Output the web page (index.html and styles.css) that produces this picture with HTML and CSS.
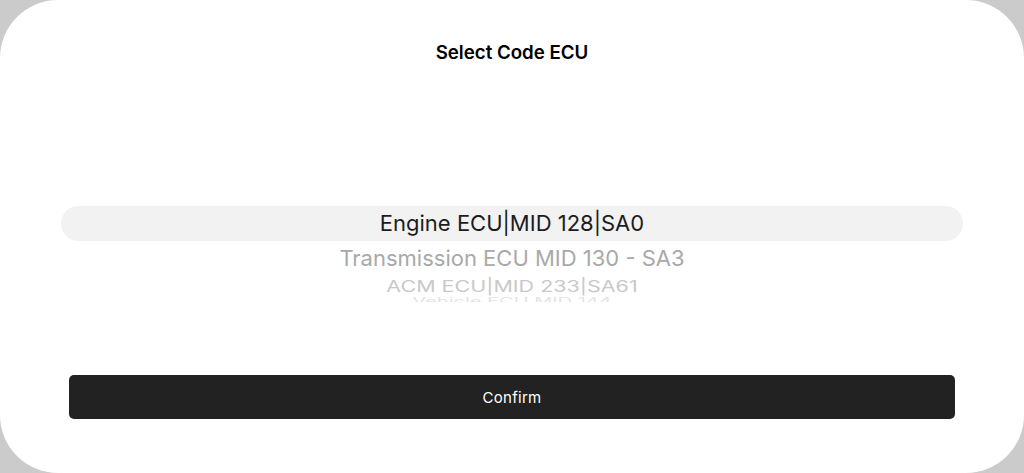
FILE: index.html
```html
<!DOCTYPE html>
<html lang="en">
<head>
<meta charset="UTF-8">
<title>Select Code ECU</title>
<link rel="stylesheet" href="styles.css">
</head>
<body>

<div class="sheet">
  <h2 class="title">Select Code ECU</h2>

  <div class="picker">
    <div class="row row-selected">Engine ECU|MID 128|SA0</div>
    <div class="row row-1">Transmission ECU MID 130 - SA3</div>
    <div class="row row-2"><span>ACM ECU|MID 233|SA61</span></div>
    <div class="row row-3"><span>Vehicle ECU MID 144</span></div>
  </div>

  <button class="btn-confirm">Confirm</button>
</div>

</body>
</html>
```

FILE: styles.css
```css
*{box-sizing:border-box;}

html,body{
    margin:0;
    height:100%;
}

body{
    background:#cbcbcb;
    font-family:Inter,"Liberation Sans",Arial,sans-serif;
}

.sheet{
    height:473px;
    background:#fff;
    border-radius:58px;
    display:flex;
    flex-direction:column;
    padding-top:41px;
}

.title{
    margin:0;
    text-align:center;
    font-size:18.7px;
    line-height:24px;
    font-weight:600;
    color:#000;
}

/* Picker */
.picker{
    margin:141px 61px 0;
    height:96px;
    overflow:hidden;
    display:flex;
    flex-direction:column;
}

.row{
    text-align:center;
    white-space:nowrap;
    flex:none;
}

.row-selected{
    height:35px;
    line-height:35px;
    background:#f2f2f2;
    border-radius:18px;
    font-size:22px;
    color:#1c1c1c;
}

.row-1{
    height:34px;
    line-height:34px;
    font-size:22px;
    color:#a9a9a9;
}

.row-2{
    height:22px;
    line-height:22px;
    font-size:21.5px;
    color:#c9c9c9;
}
.row-2 span{display:inline-block;transform:scaleY(0.72);}

.row-3{
    height:5px;
    line-height:16px;
    font-size:20px;
    color:#e4e4e4;
}
.row-3 span{display:inline-block;transform:scaleY(0.5);transform-origin:top;}

/* Button */
.btn-confirm{
    margin:73px 69px 0;
    height:44px;
    border:none;
    border-radius:5px;
    background:#222;
    color:#fff;
    font-family:inherit;
    font-size:15px;
    letter-spacing:0.3px;
}
```
